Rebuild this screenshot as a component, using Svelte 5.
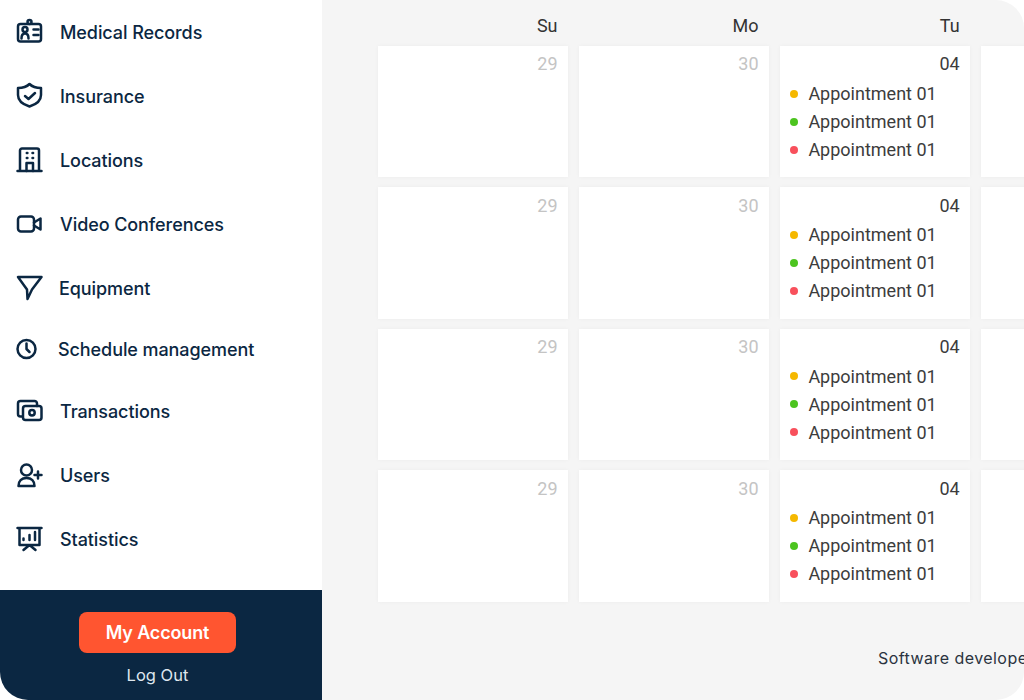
<script>
  const navItems = [
    { label: "Medical Records", icon: "card", gap: 16, shift: 0 },
    { label: "Insurance", icon: "shield", gap: 16, shift: 0 },
    { label: "Locations", icon: "building", gap: 16, shift: 0 },
    { label: "Video Conferences", icon: "video", gap: 16, shift: 0 },
    { label: "Equipment", icon: "funnel", gap: 15, shift: 0 },
    { label: "Schedule management", icon: "clock", gap: 14, shift: -3 },
    { label: "Transactions", icon: "cash", gap: 16, shift: -2 },
    { label: "Users", icon: "user", gap: 16, shift: 0 },
    { label: "Statistics", icon: "chart", gap: 16, shift: 0 }
  ];

  // last column is cut off by the window, only its white cells show
  const days = ["Su", "Mo", "Tu", ""];
  const dates = ["29", "30", "04", ""];
  const appointments = ["#f5b800", "#4cc41f", "#f8505c"];
  const weeks = [0, 1, 2, 3];
</script>

<div class="screen">
  <aside class="sidebar">
    <nav class="nav">
      {#each navItems as item}
        <a class="navItem" href="#top" style="margin-top: {item.shift}px">
          <svg class="icon" viewBox="0 0 28 28" width="28" height="28" fill="none" stroke="currentColor" stroke-width="2.5" stroke-linecap="round" stroke-linejoin="round">
            {#if item.icon === "card"}
              <rect x="2" y="6" width="23" height="17.500" rx="2.500" />
              <circle cx="13.500" cy="4" r="2" fill="#fff" />
              <circle cx="9" cy="11.500" r="2.500" />
              <path d="M5.500 20.500c0-3 1.300-5 3.500-5s3.500 2 3.500 5M17.500 11.500h5M17.500 17h5" />
            {:else if item.icon === "shield"}
              <path d="M13.500 2C16 4.500 21 6 25 6v7c0 6-5 9.500-11.500 11.500C7 22.500 2 19 2 13V6c4 0 9-1.500 11.500-4z" />
              <path d="M9 14l3.500 3 6.500-6" />
            {:else if item.icon === "building"}
              <path d="M1.500 25h24M4 25V4.500A2 2 0 0 1 6 2.500h15a2 2 0 0 1 2 2V25" />
              <path d="M10.500 25v-8h6.500v8M10.800 7h.6M16.500 7h.6M10.800 12h.6M16.500 12h.6" />
            {:else if item.icon === "video"}
              <rect x="2" y="6.500" width="16" height="15" rx="3" />
              <path d="M18 12.500l6.500-4v11l-6.500-4" />
            {:else if item.icon === "funnel"}
              <path d="M2 3h23.500L16 15.500 11.500 25 11 15.500z" />
            {:else if item.icon === "clock"}
              <circle cx="10.500" cy="14" r="9" />
              <path d="M10.500 8.500V14l3 3" />
            {:else if item.icon === "cash"}
              <path d="M6 19.500H4.500A2.500 2.500 0 0 1 2 17V6.500A2.500 2.500 0 0 1 4.500 4h14A2.500 2.500 0 0 1 21 6.500V9" />
              <rect x="7" y="9" width="18.500" height="14" rx="2.500" />
              <circle cx="16" cy="15.800" r="2.700" />
            {:else if item.icon === "user"}
              <circle cx="10.500" cy="9" r="5.500" />
              <path d="M2.500 25c0-5 3-8 8-8s8 3 8 8zM18.500 14h7M22 10.500v7" />
            {:else if item.icon === "chart"}
              <path d="M1.500 3h24M3.500 3v17h20V3M13.500 20l-6 5M13.500 20l6 5M7.500 15v-1.500M13.500 15v-5M19 15V7" />
            {/if}
          </svg>
          <span class="navLabel" style="margin-left: {item.gap}px">{item.label}</span>
        </a>
      {/each}
    </nav>
    <div class="account">
      <button class="accountBtn">My Account</button>
      <a class="logout" href="#top">Log Out</a>
    </div>
  </aside>

  <main class="main">
    <div class="calendar">
      {#each days as day}
        <div class="dayName">{day}</div>
      {/each}
      {#each weeks as week}
        {#each dates as date, i}
          <div class="cell">
            <div class="date" class:muted={i < 2}>{date}</div>
            {#if i === 2}
              <div class="list">
                {#each appointments as color}
                  <div class="appointment">
                    <span class="dot" style="background: {color}"></span>
                    Appointment 01
                  </div>
                {/each}
              </div>
            {/if}
          </div>
        {/each}
      {/each}
    </div>
    <p class="footerText">Software developer</p>
  </main>
</div>

<style>
  :global(body) {
    background: #fff;
  }

  .screen {
    display: flex;
    width: 1024px;
    height: 700px;
    overflow: hidden;
    border-radius: 0 28px 28px 28px;
    font-family: Inter, "Liberation Sans", sans-serif;
  }

  .sidebar {
    display: flex;
    flex-direction: column;
    justify-content: space-between;
    flex: 0 0 322px;
    background: #fff;
  }

  .nav {
    display: flex;
    flex-direction: column;
  }

  .navItem {
    display: flex;
    align-items: center;
    height: 64px;
    padding-left: 16px;
    color: #0b2742;
    text-decoration: none;
  }

  .navLabel {
    font-size: 18px;
    font-weight: 500;
    letter-spacing: -0.08px;
  }

  .account {
    display: flex;
    flex-direction: column;
    align-items: center;
    height: 110px;
    padding: 22px 7px 0 0;
    box-sizing: border-box;
    background: #0b2742;
  }

  .accountBtn {
    width: 157px;
    height: 41px;
    border: none;
    border-radius: 8px;
    background: #ff5530;
    color: #fff;
    font-family: inherit;
    font-size: 18px;
    font-weight: 600;
    letter-spacing: -0.15px;
  }

  .logout {
    margin-top: 12px;
    color: #dfe6ee;
    font-size: 16.500px;
    text-decoration: none;
  }

  .main {
    position: relative;
    flex: 1;
    min-width: 0;
    overflow: hidden;
    background: #f5f5f5;
    padding-left: 56px;
  }

  .calendar {
    display: grid;
    grid-template-columns: repeat(4, 189.500px);
    grid-template-rows: 36.100px repeat(4, 131.500px);
    column-gap: 11.600px;
    row-gap: 9.900px;
    font-family: Roboto, sans-serif;
  }

  .dayName {
    align-self: center;
    padding: 15px 10px 0 0;
    color: #333;
    font-size: 18px;
    text-align: right;
  }

  .cell {
    padding: 8.400px 10px 0;
    background: #fff;
    box-shadow: 0 0 4px rgba(0, 0, 0, 0.04);
  }

  .date {
    height: 20px;
    color: #3c3c3c;
    font-size: 18px;
    line-height: 20px;
    text-align: right;
  }

  .date.muted {
    color: #c4c4c4;
  }

  .list {
    margin-top: 5.200px;
  }

  .appointment {
    display: flex;
    align-items: center;
    gap: 10.200px;
    height: 28px;
    color: #3c3c3c;
    font-size: 18px;
    white-space: nowrap;
  }

  .dot {
    width: 8px;
    height: 8px;
    border-radius: 50%;
  }

  .footerText {
    position: absolute;
    left: 556px;
    top: 648px;
    margin: 0;
    color: #2a3340;
    font-family: Inter, sans-serif;
    font-size: 16px;
    letter-spacing: 0.45px;
    white-space: nowrap;
  }
</style>
